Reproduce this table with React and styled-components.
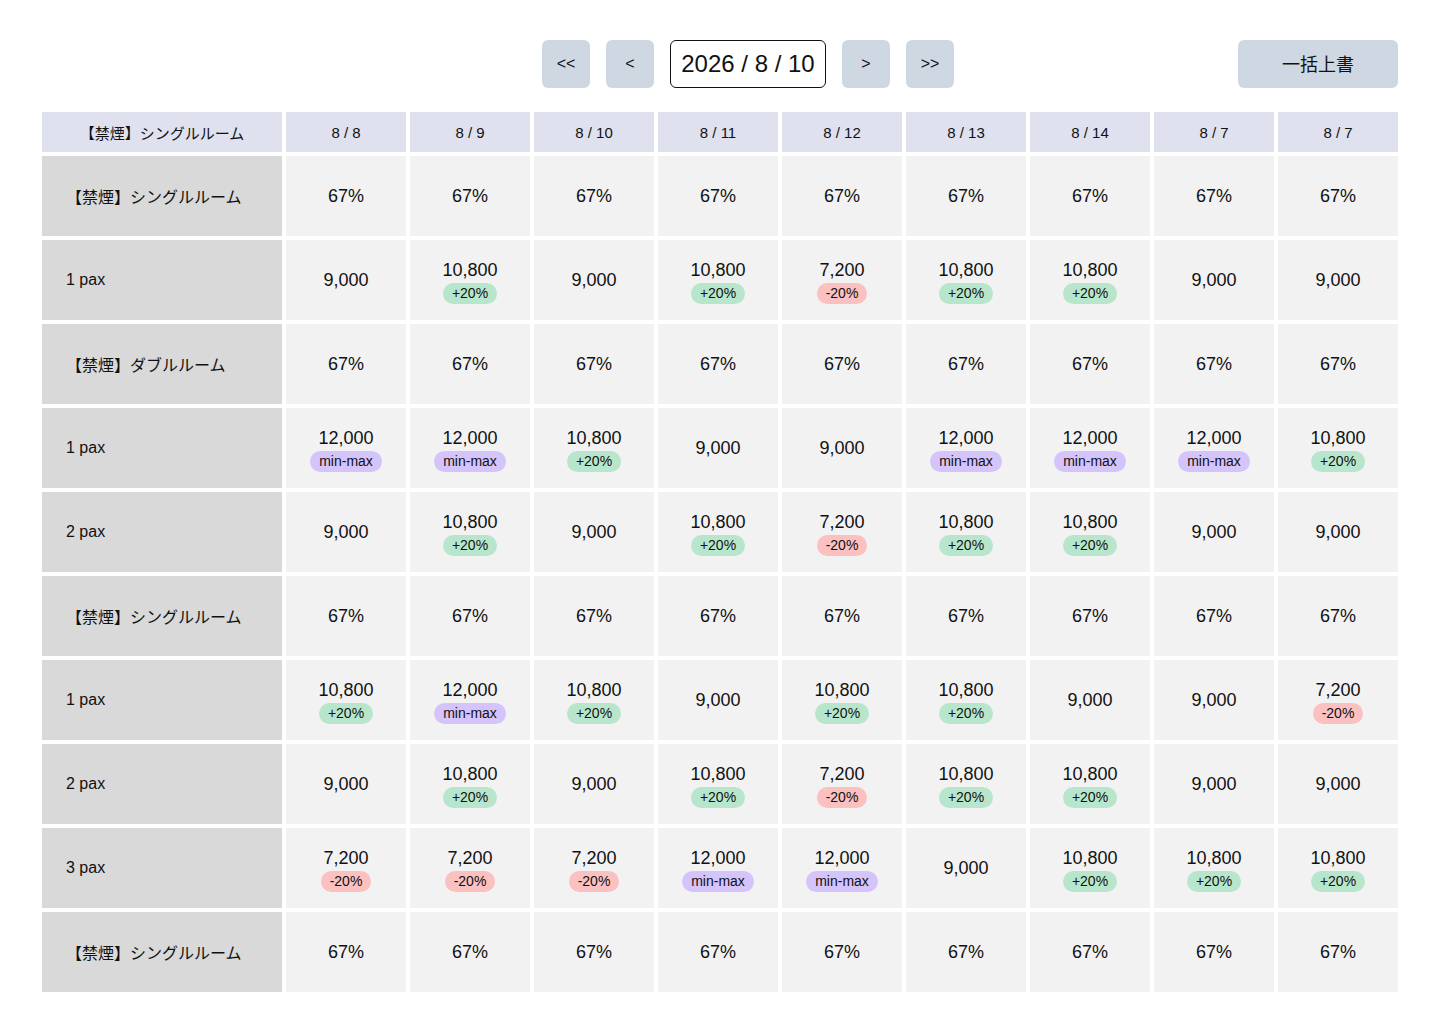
import styled, { createGlobalStyle } from "styled-components";

const GlobalStyle = createGlobalStyle`
  body {
    margin: 0;
    background: #ffffff;
    font-family: "Liberation Sans", Arial, "Noto Sans CJK JP", sans-serif;
    color: #111111;
  }
`;

const Page = styled.div`
  padding: 40px 42px 32px;
  width: 1356px;
`;

const TopBar = styled.div`
  display: flex;
  align-items: center;
  height: 48px;
  margin-bottom: 24px;
`;

const Nav = styled.div`
  display: flex;
  align-items: center;
  gap: 16px;
  margin-left: 500px;
`;

const NavButton = styled.button`
  width: 48px;
  height: 48px;
  border: none;
  border-radius: 6px;
  background: #cfd8e2;
  font-family: inherit;
  font-size: 16px;
  color: #111111;
  cursor: pointer;
`;

const DateBox = styled.div`
  width: 156px;
  height: 48px;
  box-sizing: border-box;
  border: 1px solid #111111;
  border-radius: 6px;
  display: flex;
  align-items: center;
  justify-content: center;
  font-size: 24px;
`;

const BulkButton = styled.button`
  margin-left: auto;
  width: 160px;
  height: 48px;
  padding: 0 0 3px;
  border: none;
  border-radius: 6px;
  background: #cfd8e2;
  font-family: "Liberation Sans", "Noto Sans CJK JP", sans-serif;
  font-size: 18px;
  color: #111111;
  cursor: pointer;
`;

const Grid = styled.div`
  display: grid;
  grid-template-columns: 240px repeat(9, 120px);
  gap: 4px;
`;

const HeadCell = styled.div`
  height: 40px;
  background: #dfe1ee;
  display: flex;
  align-items: center;
  justify-content: center;
  font-size: 15px;
`;

const LabelCell = styled.div`
  height: 80px;
  background: #d9d9d9;
  display: flex;
  align-items: center;
  padding-left: 24px;
  font-size: 16px;
`;

const ValueCell = styled.div`
  height: 80px;
  background: #f2f2f2;
  display: flex;
  flex-direction: column;
  align-items: center;
  justify-content: center;
  gap: 2px;
  font-size: 18px;
  line-height: 21px;
`;

const badgeColors = {
  up: "#b8e6cc",
  down: "#fbc0c0",
  mm: "#d4c4fb",
};

const Badge = styled.span`
  display: inline-block;
  height: 21px;
  line-height: 21px;
  margin-bottom: -4px;
  padding: 0 9px;
  border-radius: 11px;
  font-size: 14px;
  background: ${(p) => badgeColors[p.$kind]};
`;

const badgeText = { up: "+20%", down: "-20%", mm: "min-max" };

const dates = ["8 / 8", "8 / 9", "8 / 10", "8 / 11", "8 / 12", "8 / 13", "8 / 14", "8 / 7", "8 / 7"];

const paxA = [
  ["9,000"], ["10,800", "up"], ["9,000"], ["10,800", "up"], ["7,200", "down"],
  ["10,800", "up"], ["10,800", "up"], ["9,000"], ["9,000"],
];

const rows = [
  { room: "【禁煙】シングルルーム" },
  { label: "1 pax", cells: paxA },
  { room: "【禁煙】ダブルルーム" },
  {
    label: "1 pax",
    cells: [
      ["12,000", "mm"], ["12,000", "mm"], ["10,800", "up"], ["9,000"], ["9,000"],
      ["12,000", "mm"], ["12,000", "mm"], ["12,000", "mm"], ["10,800", "up"],
    ],
  },
  { label: "2 pax", cells: paxA },
  { room: "【禁煙】シングルルーム" },
  {
    label: "1 pax",
    cells: [
      ["10,800", "up"], ["12,000", "mm"], ["10,800", "up"], ["9,000"], ["10,800", "up"],
      ["10,800", "up"], ["9,000"], ["9,000"], ["7,200", "down"],
    ],
  },
  { label: "2 pax", cells: paxA },
  {
    label: "3 pax",
    cells: [
      ["7,200", "down"], ["7,200", "down"], ["7,200", "down"], ["12,000", "mm"], ["12,000", "mm"],
      ["9,000"], ["10,800", "up"], ["10,800", "up"], ["10,800", "up"],
    ],
  },
  { room: "【禁煙】シングルルーム" },
];

function App() {
  return (
    <Page>
      <GlobalStyle />
      <TopBar>
        <Nav>
          <NavButton>&lt;&lt;</NavButton>
          <NavButton>&lt;</NavButton>
          <DateBox>2026 / 8 / 10</DateBox>
          <NavButton>&gt;</NavButton>
          <NavButton>&gt;&gt;</NavButton>
        </Nav>
        <BulkButton>一括上書</BulkButton>
      </TopBar>
      <Grid>
        <HeadCell>【禁煙】シングルルーム</HeadCell>
        {dates.map((d, i) => (
          <HeadCell key={i}>{d}</HeadCell>
        ))}
        {rows.map((row, r) =>
          row.room
            ? [
                <LabelCell key={`l${r}`}>{row.room}</LabelCell>,
                ...dates.map((_, c) => <ValueCell key={`${r}-${c}`}>67%</ValueCell>),
              ]
            : [
                <LabelCell key={`l${r}`}>{row.label}</LabelCell>,
                ...row.cells.map(([price, kind], c) => (
                  <ValueCell key={`${r}-${c}`}>
                    <span>{price}</span>
                    {kind && <Badge $kind={kind}>{badgeText[kind]}</Badge>}
                  </ValueCell>
                )),
              ]
        )}
      </Grid>
    </Page>
  );
}

export default App;
